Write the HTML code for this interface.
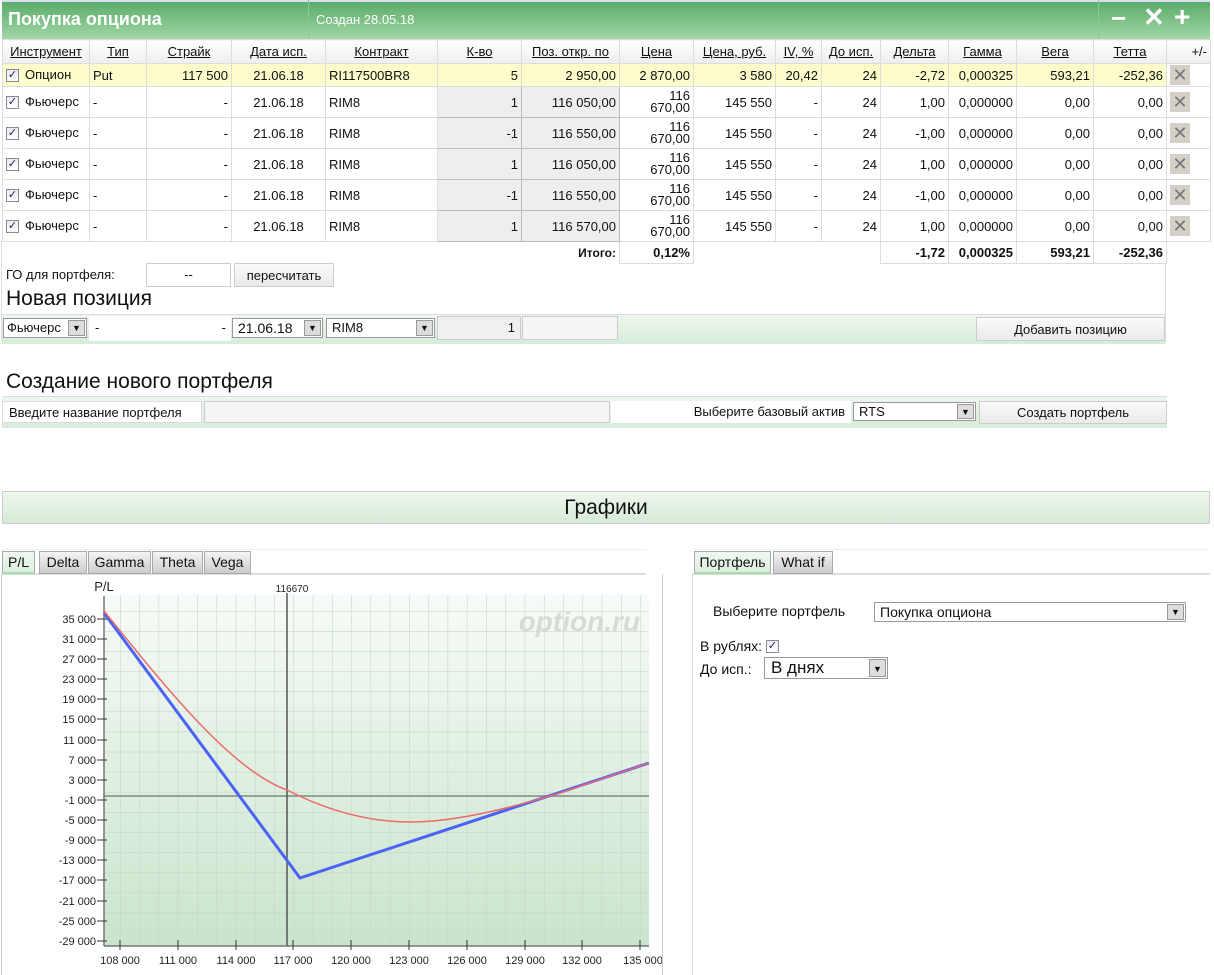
<!DOCTYPE html>
<html><head><meta charset="utf-8"><style>
*{margin:0;padding:0;box-sizing:border-box}
body{width:1214px;height:975px;background:#fff;font-family:"Liberation Sans",Arial,sans-serif;font-size:13px;color:#111;position:relative;overflow:hidden}
.abs{position:absolute}
.title{left:2px;top:0;width:1208px;height:39px;background:linear-gradient(#5aac6a,#a3d6a6);border-top:2px solid #dde}
table{border-collapse:collapse;table-layout:fixed;position:absolute;left:2px;top:39px;width:1208px}
td,th{border:1px solid #ddd;padding:0 3px;white-space:nowrap;overflow:hidden;font-weight:normal;font-size:13px;vertical-align:middle}
th{height:24px;text-decoration:underline;background:linear-gradient(#fff,#eee);text-align:center}
tr.r td{height:31px}
tr.y td{height:23px;background:#fdfccb}
.n{text-align:right}
.g{background:#eee;border:1px solid #bbb}
.cb{display:inline-block;width:13px;height:13px;border:1px solid #889;background:linear-gradient(#e8eaf4,#fff);vertical-align:middle;margin-right:6px;position:relative;top:-1px;font-size:11px;line-height:11px;color:#224;text-align:center}
.x{display:inline-block;width:20px;height:20px;background:#d4d0c8;color:#777;font-size:18px;line-height:20px;text-align:center;vertical-align:middle}
.sm{font-size:13px;line-height:12px}
.btn{background:linear-gradient(#fafafa,#eaeaea);border:1px solid #ccc;text-align:center}
.sel{border:1px solid #999;background:#fff}
.arr{position:absolute;right:1px;top:1px;bottom:1px;width:17px;background:#ddd;border:1px solid #999;font-size:9px;text-align:center;line-height:14px}
.tab{position:absolute;top:551px;height:23px;background:linear-gradient(#f5f5f5,#ccc);border:1px solid #aaa;text-align:center;line-height:21px;font-size:14px}
</style></head><body>
<div class="abs title"></div>
<div class="abs" style="left:308px;top:0;width:1px;height:39px;background:#8cc79a"></div>
<div class="abs" style="left:1098px;top:0;width:1px;height:39px;background:#8cc79a"></div>
<div class="abs" style="left:8px;top:9px;font-size:18px;font-weight:bold;color:#fff">Покупка опциона</div>
<div class="abs" style="left:316px;top:12px;font-size:13px;color:#fff">Создан 28.05.18</div>
<div class="abs" style="left:1111px;top:3px;font-size:26px;font-weight:bold;color:#fff">−</div>
<div class="abs" style="left:1143px;top:2px;font-size:26px;font-weight:bold;color:#fff">✕</div>
<div class="abs" style="left:1174px;top:1px;font-size:28px;font-weight:bold;color:#fff">+</div>
<table>
<colgroup><col style="width:87px"><col style="width:57px"><col style="width:85px"><col style="width:94px"><col style="width:112px"><col style="width:84px"><col style="width:98px"><col style="width:74px"><col style="width:82px"><col style="width:46px"><col style="width:59px"><col style="width:68px"><col style="width:68px"><col style="width:77px"><col style="width:73px"><col style="width:44px"></colgroup>
<tr><th>Инструмент</th><th>Тип</th><th>Страйк</th><th>Дата исп.</th><th>Контракт</th><th>К-во</th><th>Поз. откр. по</th><th>Цена</th><th>Цена, руб.</th><th>IV, %</th><th>До исп.</th><th>Дельта</th><th>Гамма</th><th>Вега</th><th>Тетта</th><th style="text-decoration:none;text-align:right">+/-</th></tr>
<tr class="y"><td><span class="cb">✓</span>Опцион</td><td>Put</td><td class="n">117 500</td><td style="text-align:center">21.06.18</td><td>RI117500BR8</td><td class="n">5</td><td class="n">2 950,00</td><td class="n">2 870,00</td><td class="n">3 580</td><td class="n">20,42</td><td class="n">24</td><td class="n">-2,72</td><td class="n">0,000325</td><td class="n">593,21</td><td class="n">-252,36</td><td style="background:#fff"><span class="x">✕</span></td></tr>
<tr class="r"><td><span class="cb">✓</span>Фьючерс</td><td>-</td><td class="n">-</td><td style="text-align:center">21.06.18</td><td>RIM8</td><td class="n g">1</td><td class="n g">116 050,00</td><td class="n sm">116<br>670,00</td><td class="n">145 550</td><td class="n">-</td><td class="n">24</td><td class="n">1,00</td><td class="n">0,000000</td><td class="n">0,00</td><td class="n">0,00</td><td><span class="x">✕</span></td></tr>
<tr class="r"><td><span class="cb">✓</span>Фьючерс</td><td>-</td><td class="n">-</td><td style="text-align:center">21.06.18</td><td>RIM8</td><td class="n g">-1</td><td class="n g">116 550,00</td><td class="n sm">116<br>670,00</td><td class="n">145 550</td><td class="n">-</td><td class="n">24</td><td class="n">-1,00</td><td class="n">0,000000</td><td class="n">0,00</td><td class="n">0,00</td><td><span class="x">✕</span></td></tr>
<tr class="r"><td><span class="cb">✓</span>Фьючерс</td><td>-</td><td class="n">-</td><td style="text-align:center">21.06.18</td><td>RIM8</td><td class="n g">1</td><td class="n g">116 050,00</td><td class="n sm">116<br>670,00</td><td class="n">145 550</td><td class="n">-</td><td class="n">24</td><td class="n">1,00</td><td class="n">0,000000</td><td class="n">0,00</td><td class="n">0,00</td><td><span class="x">✕</span></td></tr>
<tr class="r"><td><span class="cb">✓</span>Фьючерс</td><td>-</td><td class="n">-</td><td style="text-align:center">21.06.18</td><td>RIM8</td><td class="n g">-1</td><td class="n g">116 550,00</td><td class="n sm">116<br>670,00</td><td class="n">145 550</td><td class="n">-</td><td class="n">24</td><td class="n">-1,00</td><td class="n">0,000000</td><td class="n">0,00</td><td class="n">0,00</td><td><span class="x">✕</span></td></tr>
<tr class="r"><td><span class="cb">✓</span>Фьючерс</td><td>-</td><td class="n">-</td><td style="text-align:center">21.06.18</td><td>RIM8</td><td class="n g">1</td><td class="n g">116 570,00</td><td class="n sm">116<br>670,00</td><td class="n">145 550</td><td class="n">-</td><td class="n">24</td><td class="n">1,00</td><td class="n">0,000000</td><td class="n">0,00</td><td class="n">0,00</td><td><span class="x">✕</span></td></tr>
<tr style="font-weight:bold"><td colspan="7" class="n" style="height:22px;border:none;font-weight:bold;font-size:12px">Итого:</td><td class="n" style="font-weight:bold">0,12%</td><td style="border:none"></td><td style="border:none"></td><td style="border:none"></td><td class="n" style="font-weight:bold">-1,72</td><td class="n" style="font-weight:bold">0,000325</td><td class="n" style="font-weight:bold">593,21</td><td class="n" style="font-weight:bold">-252,36</td><td style="border:none"></td></tr>
</table>
<div class="abs" style="left:1165px;top:263px;width:1px;height:80px;background:#ddd"></div>
<div class="abs" style="left:1px;top:241px;width:1px;height:100px;background:#ddd"></div>
<div class="abs" style="left:6px;top:267px">ГО для портфеля:</div>
<div class="abs" style="left:146px;top:263px;width:85px;height:24px;border:1px solid #ccc;text-align:center;line-height:22px">--</div>
<div class="abs btn" style="left:234px;top:263px;width:100px;height:24px;line-height:24px">пересчитать</div>
<div class="abs" style="left:6px;top:287px;font-size:21px">Новая позиция</div>
<div class="abs" style="left:2px;top:314px;width:1163px;height:30px;background:linear-gradient(#eef6ee,#d7ecd9);border-top:1px solid #ddd"></div>
<div class="abs sel" style="left:3px;top:318px;width:84px;height:20px;padding-left:3px;line-height:18px">Фьючерс<div class="arr">▼</div></div>
<div class="abs" style="left:89px;top:316px;width:57px;height:25px;background:#fff;padding-left:6px;line-height:24px">-</div>
<div class="abs" style="left:146px;top:316px;width:85px;height:25px;background:#fff;text-align:right;padding-right:5px;line-height:24px">-</div>
<div class="abs sel" style="left:232px;top:318px;width:91px;height:20px;padding-left:5px;line-height:18px;font-size:14px">21.06.18<div class="arr">▼</div></div>
<div class="abs sel" style="left:326px;top:318px;width:109px;height:20px;padding-left:5px;line-height:18px">RIM8<div class="arr">▼</div></div>
<div class="abs" style="left:437px;top:316px;width:84px;height:24px;background:#f0f0f0;border:1px solid #ccc;text-align:right;padding-right:5px;line-height:22px">1</div>
<div class="abs" style="left:522px;top:316px;width:96px;height:24px;background:#f5f5f5;border:1px solid #ccc"></div>
<div class="abs btn" style="left:976px;top:317px;width:189px;height:24px;line-height:24px">Добавить позицию</div>
<div class="abs" style="left:6px;top:370px;font-size:21px">Создание нового портфеля</div>
<div class="abs" style="left:2px;top:396px;width:1165px;height:32px;background:linear-gradient(#eef6ee,#d7ecd9);border-top:1px solid #ddd"></div>
<div class="abs" style="left:2px;top:401px;width:200px;height:22px;background:#fff;border:1px solid #ddd;padding-left:6px;line-height:21px">Введите название портфеля</div>
<div class="abs" style="left:204px;top:401px;width:406px;height:22px;background:#f5f5f5;border:1px solid #ccc"></div>
<div class="abs" style="left:611px;top:401px;width:240px;height:22px;background:#fff;text-align:right;padding-right:6px;line-height:21px">Выберите базовый актив</div>
<div class="abs sel" style="left:853px;top:402px;width:123px;height:19px;padding-left:5px;line-height:17px">RTS<div class="arr">▼</div></div>
<div class="abs btn" style="left:979px;top:401px;width:188px;height:23px;line-height:22px">Создать портфель</div>
<div class="abs" style="left:2px;top:491px;width:1208px;height:33px;background:linear-gradient(#eef7ee,#d6ebd7);border:1px solid #ccc;text-align:center;font-size:21px;line-height:31px">Графики</div>
<div class="abs" style="left:2px;top:549px;width:644px;height:1px;background:#eee"></div>
<div class="abs" style="left:2px;top:573px;width:644px;height:2px;background:#ddd"></div>
<div class="abs" style="left:1px;top:574px;width:1px;height:401px;background:#ccc"></div>
<div class="abs" style="left:662px;top:574px;width:1px;height:401px;background:#ccc"></div>
<div class="tab" style="left:2px;width:33px;background:linear-gradient(#f0f8f0,#dcefdd);border-bottom:2px solid #a9dbb0">P/L</div>
<div class="tab" style="left:39px;width:48px">Delta</div>
<div class="tab" style="left:88px;width:63px">Gamma</div>
<div class="tab" style="left:152px;width:51px">Theta</div>
<div class="tab" style="left:204px;width:47px">Vega</div>
<div class="abs" style="left:693px;top:549px;width:517px;height:1px;background:#eee"></div>
<div class="abs" style="left:693px;top:573px;width:517px;height:2px;background:#ddd"></div>
<div class="abs" style="left:692px;top:574px;width:1px;height:401px;background:#ddd"></div>
<div class="tab" style="left:694px;width:77px;background:linear-gradient(#f0f8f0,#dcefdd);border-bottom:2px solid #a9dbb0">Портфель</div>
<div class="tab" style="left:773px;width:60px">What if</div>
<div class="abs" style="left:713px;top:603px;font-size:14px">Выберите портфель</div>
<div class="abs sel" style="left:874px;top:602px;width:312px;height:20px;padding-left:5px;line-height:18px;font-size:14px">Покупка опциона<div class="arr">▼</div></div>
<div class="abs" style="left:700px;top:638px;font-size:14px">В рублях: <span class="cb">✓</span></div>
<div class="abs" style="left:700px;top:661px;font-size:14px">До исп.:</div>
<div class="abs sel" style="left:764px;top:657px;width:124px;height:22px;padding-left:6px;line-height:20px;font-size:17px">В днях<div class="arr" style="line-height:18px">▼</div></div>
<svg class="abs" style="left:0;top:575px" width="662" height="400" viewBox="0 575 662 400" font-family="Liberation Sans, Arial, sans-serif">
<defs><linearGradient id="bg" x1="0" y1="0" x2="0" y2="1"><stop offset="0" stop-color="#f7fbf7"/><stop offset="1" stop-color="#c9e4cd"/></linearGradient>
<pattern id="gv" x="104" y="0" width="19.27" height="20.1" patternUnits="userSpaceOnUse" patternTransform="translate(16,8)"><path d="M0 0V20.1M0 0H19.27" stroke="#c6d6c8" stroke-width="1.2" fill="none"/></pattern></defs>
<rect x="104" y="595" width="545" height="351" fill="url(#bg)"/>
<rect x="104" y="595" width="545" height="351" fill="url(#gv)"/>
<text x="640" y="631" font-size="28" font-weight="bold" font-style="italic" fill="#d5dcd6" text-anchor="end">option.ru</text>
<line x1="104" y1="796" x2="649" y2="796" stroke="#7d8a80" stroke-width="1.5"/>
<line x1="287" y1="593" x2="287" y2="946" stroke="#555" stroke-width="1.5"/>
<line x1="104" y1="596" x2="104" y2="946" stroke="#777" stroke-width="1.5"/>
<line x1="104" y1="946" x2="649" y2="946" stroke="#777" stroke-width="1.5"/>
<text x="104" y="591" font-size="13" text-anchor="middle" fill="#222">P/L</text>
<text x="292" y="592" font-size="10" text-anchor="middle" fill="#222">116670</text>
<g font-size="11" fill="#222" text-anchor="end">
<text x="96" y="623">35 000</text><text x="96" y="643">31 000</text><text x="96" y="663">27 000</text><text x="96" y="683">23 000</text><text x="96" y="703">19 000</text><text x="96" y="723">15 000</text><text x="96" y="744">11 000</text><text x="96" y="764">7 000</text><text x="96" y="784">3 000</text><text x="96" y="804">-1 000</text><text x="96" y="824">-5 000</text><text x="96" y="844">-9 000</text><text x="96" y="864">-13 000</text><text x="96" y="884">-17 000</text><text x="96" y="905">-21 000</text><text x="96" y="925">-25 000</text><text x="96" y="945">-29 000</text></g>
<g stroke="#333" stroke-width="1"><path d="M97 619h10M97 639h10M97 659h10M97 679h10M97 699h10M97 719h10M97 740h10M97 760h10M97 780h10M97 800h10M97 820h10M97 840h10M97 860h10M97 880h10M97 901h10M97 921h10M97 941h10"/>
<path d="M120 940v10M178 940v10M236 940v10M293 940v10M351 940v10M409 940v10M467 940v10M525 940v10M582 940v10M640 940v10"/></g>
<g font-size="11" fill="#222" text-anchor="middle"><text x="120" y="964">108 000</text><text x="178" y="964">111 000</text><text x="236" y="964">114 000</text><text x="293" y="964">117 000</text><text x="351" y="964">120 000</text><text x="409" y="964">123 000</text><text x="467" y="964">126 000</text><text x="525" y="964">129 000</text><text x="582" y="964">132 000</text><text x="643" y="964">135 000</text></g>
<path d="M104 613L300 878L649 763" stroke="#4a63f5" stroke-width="3" fill="none"/>
<path d="M104 611C160 680 230 770 287 790C330 812 370 822 410 822C460 822 520 805 560 793L649 763" stroke="#ec6a6a" stroke-width="1.5" fill="none"/>
</svg>
</body></html>
